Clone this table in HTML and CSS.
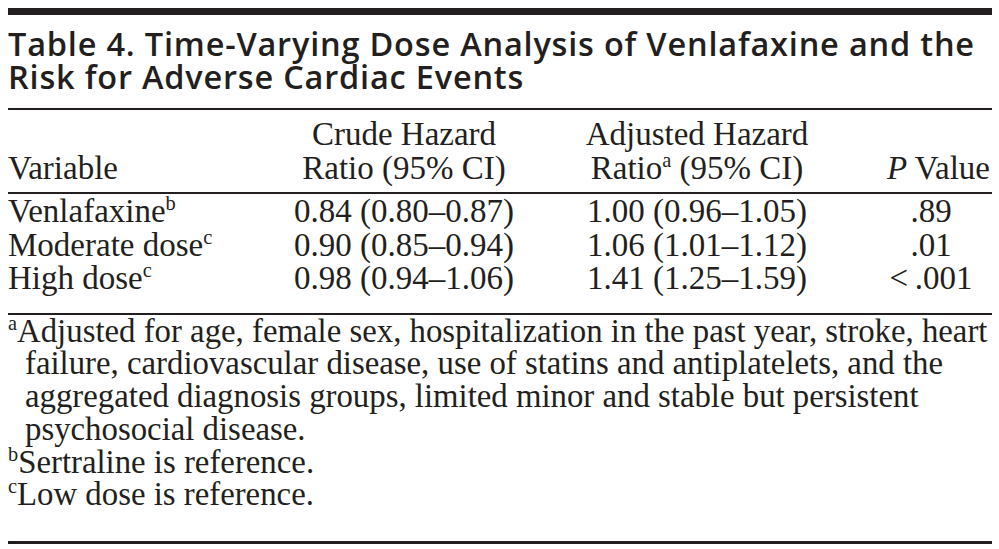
FILE: index.html
```
<!DOCTYPE html>
<html lang="en">
<head>
<meta charset="utf-8">
<title>Table 4</title>
<link rel="stylesheet" href="styles.css">
</head>
<body>
<div class="table-block">
  <h1 class="title">Table 4. Time-Varying Dose Analysis of Venlafaxine and the<br>Risk for Adverse Cardiac Events</h1>
  <div class="grid head">
    <div class="cell c1 bottom">Variable</div>
    <div class="cell c2">Crude Hazard<br>Ratio (95% CI)</div>
    <div class="cell c3">Adjusted Hazard<br>Ratio<sup>a</sup> (95% CI)</div>
    <div class="cell c4 bottom"><i>P</i> Value</div>
  </div>
  <div class="grid body">
    <div class="cell c1">Venlafaxine<sup>b</sup></div>
    <div class="cell c2">0.84 (0.80–0.87)</div>
    <div class="cell c3">1.00 (0.96–1.05)</div>
    <div class="cell c4d">.89</div>

    <div class="cell c1">Moderate dose<sup>c</sup></div>
    <div class="cell c2">0.90 (0.85–0.94)</div>
    <div class="cell c3">1.06 (1.01–1.12)</div>
    <div class="cell c4d">.01</div>

    <div class="cell c1">High dose<sup>c</sup></div>
    <div class="cell c2">0.98 (0.94–1.06)</div>
    <div class="cell c3">1.41 (1.25–1.59)</div>
    <div class="cell c4d">&lt;&#8201;.001</div>
  </div>
  <div class="notes">
    <p class="note"><sup>a</sup>Adjusted for age, female sex, hospitalization in the past year, stroke, heart<br>failure, cardiovascular disease, use of statins and antiplatelets, and the<br>aggregated diagnosis groups, limited minor and stable but persistent<br>psychosocial disease.</p>
    <p class="note"><sup>b</sup>Sertraline is reference.</p>
    <p class="note"><sup>c</sup>Low dose is reference.</p>
  </div>
</div>
</body>
</html>
```
FILE: styles.css
```
html, body {
  margin: 0;
  padding: 0;
  background: #ffffff;
}
body {
  padding: 8px;
  color: #231f20;
}
.table-block {
  width: 984px;
  border-top: 7px solid #231f20;
  border-bottom: 3px solid #231f20;
  font-family: "Liberation Serif", "Times New Roman", serif;
  font-size: 33px;
}
.title {
  margin: 0;
  padding: 12px 0 15px 0;
  font-family: "Open Sans", Roboto, sans-serif;
  font-weight: 600;
  font-size: 32.5px;
  line-height: 33px;
  letter-spacing: 0.8px;
  border-bottom: 2px solid #231f20;
}
.grid {
  display: grid;
  grid-template-columns: 250px 292px 294px 148px;
}
.head {
  padding: 7px 0 7px 0;
  line-height: 34px;
  border-bottom: 2px solid #231f20;
}
.body {
  padding: 1px 0 17px 0;
  line-height: 33.5px;
  border-bottom: 2px solid #231f20;
}
.cell {
  white-space: nowrap;
}
.c1 {
  text-align: left;
}
.c2, .c3 {
  text-align: center;
}
.c4 {
  text-align: right;
  padding-right: 2px;
}
.c4d {
  text-align: center;
  padding-left: 26px;
}
.bottom {
  align-self: end;
}
sup {
  font-size: 0.62em;
  line-height: 0;
  vertical-align: 0.6em;
}
.notes {
  padding: 0 0 30px 0;
  line-height: 32.8px;
  font-size: 32.8px;
}
.note {
  margin: 0;
  padding-left: 17px;
  text-indent: -17px;
  white-space: nowrap;
}
```
